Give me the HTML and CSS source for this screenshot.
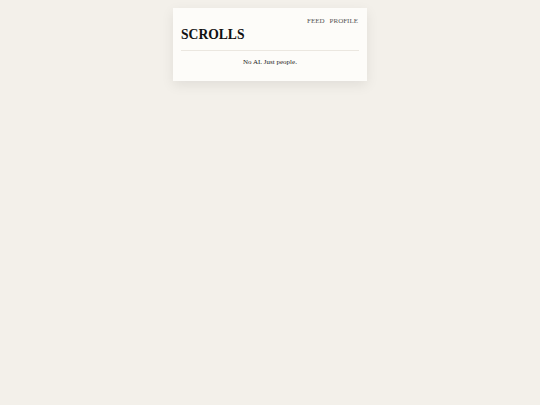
FILE: index.html
```html
<!DOCTYPE html>
<html>
<head>
<meta charset="utf-8">
<link rel="stylesheet" href="styles.css">
</head>
<body>
<main class="card">
  <header class="header">
    <nav class="nav">
      <a href="#">FEED</a>
      <a href="#">PROFILE</a>
    </nav>
    <h1 class="title">SCROLLS</h1>
  </header>
  <p class="tagline">No AI. Just people.</p>
</main>
</body>
</html>
```
FILE: styles.css
```css
html, body {
  margin: 0;
  padding: 0;
}
body {
  background: #f3f0ea;
  font-family: "Liberation Serif", "Times New Roman", serif;
  color: #1a1a1a;
  width: 540px;
  height: 405px;
}
.card {
  width: 194px;
  box-sizing: border-box;
  margin: 8px auto 0;
  background: #fdfcf9;
  padding: 8px 8px 14px;
  box-shadow: 0 4px 12px rgba(0, 0, 0, 0.08);
}
.header {
  border-bottom: 1px solid #ebe7e0;
  padding-bottom: 7px;
}
.nav {
  display: flex;
  justify-content: flex-end;
  gap: 5px;
  padding-right: 1px;
  font-size: 7px;
  line-height: 10px;
}
.nav a {
  color: #555;
  text-decoration: none;
}
.title {
  margin: 1px 0 0;
  font-size: 13.6px;
  line-height: 16px;
  font-weight: bold;
  color: #111;
}
.tagline {
  margin: 7px 0 0;
  text-align: center;
  font-size: 7px;
  line-height: 9px;
  color: #222;
}
```
